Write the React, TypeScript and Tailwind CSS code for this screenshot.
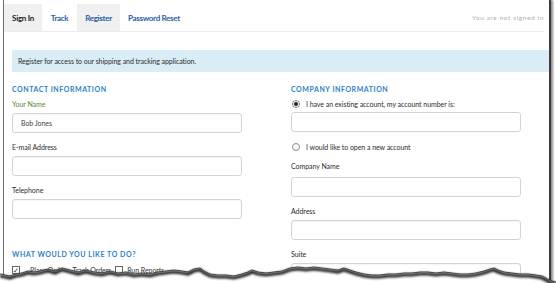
const tear: [number, number][] = [
  [0, 274], [5, 275], [10, 276], [16, 274], [22, 273], [28, 271], [34, 272], [40, 271], [48, 269], [55, 271],
  [62, 268], [70, 270], [78, 272], [86, 270], [94, 272], [102, 273], [110, 271], [118, 273], [126, 272],
  [134, 274], [142, 273], [150, 274], [158, 272], [166, 271], [174, 270], [182, 271], [188, 272], [194, 269],
  [200, 268], [204, 271], [210, 274], [218, 275], [226, 275], [234, 276], [242, 274], [248, 272], [252, 270],
  [258, 272], [266, 273], [274, 272], [282, 271], [290, 268], [298, 267], [306, 268], [314, 267], [322, 268],
  [330, 269], [338, 270], [344, 268], [350, 270], [356, 272], [364, 274], [372, 275], [380, 275], [388, 274],
  [396, 274], [404, 273], [412, 273], [420, 272], [428, 272], [436, 273], [444, 272], [452, 273], [460, 274],
  [468, 274], [476, 273], [484, 271], [490, 269], [494, 268], [498, 270], [504, 272], [512, 273], [520, 274],
  [528, 274], [536, 275], [542, 276], [546, 278], [549, 280], [552, 281], [556, 282],
];

function TornEdge() {
  const top = 255;
  const line = tear.map(([x, y], i) => `${i ? "L" : "M"}${x} ${y - top}`).join(" ");
  const fill = `${line} L556 28 L0 28 Z`;
  return (
    <svg className="absolute left-0 bottom-0" width="556" height="28" viewBox="0 0 556 28">
      <defs>
        <filter id="blur" x="-5%" y="-50%" width="110%" height="200%">
          <feGaussianBlur stdDeviation="1" />
        </filter>
      </defs>
      <path d={fill} fill="#fff" />
      <path d={line} transform="translate(0 2)" stroke="#222" strokeWidth="3.2" fill="none" filter="url(#blur)" />
      <path d={line} stroke="#444" strokeWidth="1" fill="none" />
    </svg>
  );
}

function Field({ label, value, green }: { label: string; value?: string; green?: boolean }) {
  return (
    <div>
      <div className={`h-[10px] leading-[10px] ${green ? "text-[#5f8a2c]" : "text-[#2d2d2d]"}`}>{label}</div>
      <div className="mt-[4px] h-[20px] rounded-[3px] border border-[#d4d4d4] bg-white pl-[8px] leading-[18px] text-[#444] shadow-[inset_0_1px_1px_rgba(0,0,0,0.04)]">
        {value}
      </div>
    </div>
  );
}

function Radio({ checked, label }: { checked?: boolean; label: string }) {
  return (
    <div className="flex h-[10px] items-center">
      <span className="ml-[1px] flex h-[8px] w-[8px] items-center justify-center rounded-full border border-[#888] bg-white">
        {checked && <span className="h-[4px] w-[4px] rounded-full bg-[#222]" />}
      </span>
      <span className="ml-[6px] leading-[10px] text-[#2d2d2d]">{label}</span>
    </div>
  );
}

function Heading({ children }: { children: string }) {
  return (
    <div className="h-[10px] text-[7px] font-bold leading-[10px] tracking-[0.55px] text-[#2e7fc6]">{children}</div>
  );
}

export default function App() {
  return (
    <div className="relative h-[283px] w-[556px] overflow-hidden bg-white text-[7px] font-['Lato','Liberation_Sans',sans-serif] tracking-[-0.05px]">
      <div className="ml-[3px] h-full w-[548px] border-l border-l-[#6b6b6b] border-r-2 border-r-[#3a3a3a] shadow-[2px_0_2px_rgba(0,0,0,0.45)]">
        <div className="mr-[5px] flex h-[32px] border-b border-[#ececec] pt-[4px] text-[8px] font-bold tracking-[-0.3px]">
          <div className="flex w-[38px] items-center justify-center bg-[#f0f0f0] text-[#222]">Sign In</div>
          <div className="flex w-[35px] items-center justify-center text-[#1f5fa9]">Track</div>
          <div className="flex w-[43px] items-center justify-center bg-[#f0f0f0] text-[#1f5fa9]">Register</div>
          <div className="flex items-center pl-[8px] text-[#1f5fa9]">Password Reset</div>
          <div className="ml-auto flex items-center text-[6.5px] font-normal tracking-[0.6px] text-[#b0b0b0]">
            You are not signed in
          </div>
        </div>

        <div className="ml-[8px] mt-[18px] flex h-[22px] items-center bg-[#d9edf7] pl-[6px] text-[#2b2b2b]">
          Register for access to our shipping and tracking application.
        </div>

        <div className="ml-[8px] mt-[12px] flex gap-[49px]">
          <div className="flex w-[230px] flex-col">
            <Heading>CONTACT INFORMATION</Heading>
            <div className="mt-[5px]">
              <Field label="Your Name" value="Bob Jones" green />
            </div>
            <div className="mt-[9px]">
              <Field label="E-mail Address" />
            </div>
            <div className="mt-[9px]">
              <Field label="Telephone" />
            </div>
            <div className="mt-[30px]">
              <Heading>WHAT WOULD YOU LIKE TO DO?</Heading>
            </div>
            <div className="mt-[6px] flex h-[10px] items-center gap-[4px] text-[#333]">
              <span className="flex h-[8px] w-[8px] items-center justify-center border border-[#666] text-[7px] leading-none">✓</span>
              <span className="ml-[6px]">Place Orders</span>
              <span>Track Orders</span>
              <span className="h-[8px] w-[8px] border border-[#666]" />
              <span>Run Reports</span>
            </div>
          </div>

          <div className="flex w-[230px] flex-col">
            <Heading>COMPANY INFORMATION</Heading>
            <div className="mt-[5px]">
              <Radio checked label="I have an existing account, my account number is:" />
            </div>
            <div className="mt-[3px] h-[20px] rounded-[3px] border border-[#d4d4d4]" />
            <div className="mt-[10px]">
              <Radio label="I would like to open a new account" />
            </div>
            <div className="mt-[9px] h-[10px] leading-[10px] text-[#2d2d2d]">Company Name</div>
            <div className="mt-[6px] h-[20px] rounded-[3px] border border-[#d4d4d4]" />
            <div className="mt-[9px]">
              <Field label="Address" />
            </div>
            <div className="mt-[9px]">
              <Field label="Suite" />
            </div>
          </div>
        </div>
      </div>
      <TornEdge />
    </div>
  );
}
